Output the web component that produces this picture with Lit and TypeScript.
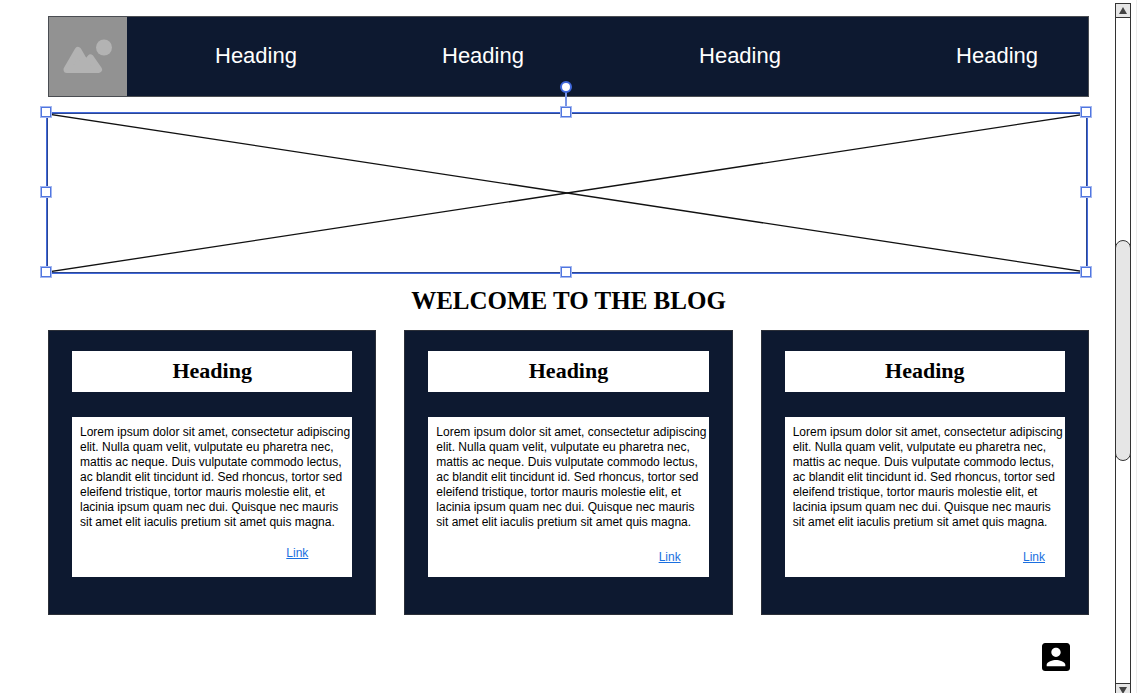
import { LitElement, html, css, svg } from "lit";
import { customElement, property } from "lit/decorators.js";
import { classMap } from "lit/directives/class-map.js";

const LOREM = [
  "Lorem ipsum dolor sit amet, consectetur adipiscing",
  "elit. Nulla quam velit, vulputate eu pharetra nec,",
  "mattis ac neque. Duis vulputate commodo lectus,",
  "ac blandit elit tincidunt id. Sed rhoncus, tortor sed",
  "eleifend tristique, tortor mauris molestie elit, et",
  "lacinia ipsum quam nec dui. Quisque nec mauris",
  "sit amet elit iaculis pretium sit amet quis magna.",
].join("\n");

@customElement("site-nav")
class SiteNav extends LitElement {
  static styles = css`
    :host {
      display: block;
    }
    .bar {
      display: flex;
      box-sizing: border-box;
      height: 81px;
      background: #0d1930;
      border: 1px solid #4a4d52;
    }
    .logo {
      flex: none;
      width: 78px;
      background: #929292;
    }
    .logo svg {
      display: block;
    }
    .links {
      flex: 1;
      display: grid;
      grid-template-columns: 227fr 257fr 257fr auto;
      align-items: center;
      padding: 0 50px 2px 88px;
    }
    .link {
      color: #fff;
      font-size: 22px;
      line-height: 26px;
      text-decoration: none;
    }
  `;

  render() {
    return html`
      <nav class="bar">
        <div class="logo">
          <svg width="78" height="79" viewBox="0 0 78 79" fill="#b3b3b3" aria-hidden="true">
            <circle cx="55" cy="30.500" r="8" />
            <path
              d="M18 52.500L29 33.500L40 52.500ZM32 52.500L41.500 41L49.500 52.500Z"
              stroke="#b3b3b3"
              stroke-width="7"
              stroke-linejoin="round"
            />
          </svg>
        </div>
        <div class="links">
          ${[1, 2, 3, 4].map(() => html`<a class="link" href="#">Heading</a>`)}
        </div>
      </nav>
    `;
  }
}

@customElement("hero-frame")
class HeroFrame extends LitElement {
  static styles = css`
    :host {
      display: block;
    }
    .frame {
      position: relative;
      box-sizing: border-box;
      height: 162px;
      border: 2px solid #4169dc;
    }
    .cross {
      display: block;
      box-sizing: border-box;
      width: 100%;
      height: 100%;
    }
    .edge {
      position: absolute;
      inset: -1px;
      border: 1px solid #2c4690;
    }
    .selection {
      position: absolute;
      inset: -2px 0 0 -2px;
    }
    .handle {
      position: absolute;
      box-sizing: border-box;
      width: 12px;
      height: 12px;
      margin: -6px;
      background: #fff;
      border: 1px solid #a3b7f0;
      box-shadow: inset 0 0 0 1px #5076e0;
    }
    .left {
      left: 0;
    }
    .center {
      left: 50%;
    }
    .right {
      left: 100%;
    }
    .top {
      top: 0;
    }
    .middle {
      top: 50%;
    }
    .bottom {
      top: 100%;
    }
    .stem {
      position: absolute;
      left: 50%;
      bottom: 100%;
      width: 2px;
      height: 20px;
      margin-left: -1px;
      background: #7894e6;
    }
    .rotate {
      position: absolute;
      left: 50%;
      top: -25px;
      box-sizing: border-box;
      width: 12px;
      height: 12px;
      margin: -6px;
      background: #fff;
      border: 2px solid #4169dc;
      border-radius: 50%;
    }
  `;

  render() {
    const rows = ["top", "middle", "bottom"];
    const cols = ["left", "center", "right"];
    return html`
      <div class="frame">
        <svg class="cross" viewBox="0 0 100 100" preserveAspectRatio="none" aria-hidden="true">
          ${["M0 0L100 100", "M0 100L100 0"].map(
            (d) => svg`<path d=${d} stroke="#111" stroke-width="1.300" vector-effect="non-scaling-stroke" />`
          )}
        </svg>
        <div class="edge"></div>
        <div class="selection">
          <div class="stem"></div>
          <div class="rotate"></div>
          ${rows.map((r) =>
            cols.map((c) =>
              r === "middle" && c === "center"
                ? null
                : html`<div class=${classMap({ handle: true, [r]: true, [c]: true })}></div>`
            )
          )}
        </div>
      </div>
    `;
  }
}

@customElement("blog-card")
class BlogCard extends LitElement {
  @property() link = "end";

  static styles = css`
    :host {
      display: block;
    }
    .card {
      box-sizing: border-box;
      background: #0d1930;
      border: 1px solid #2b2f38;
      padding: 20px 23px 37px;
    }
    .title {
      margin: 0 0 25px;
      padding: 7px 0 8px;
      background: #fff;
      font: bold 22px/26px "Liberation Serif", "Times New Roman", serif;
      text-align: center;
    }
    .body {
      box-sizing: border-box;
      min-height: 160px;
      padding: 8px 0 0 8px;
      background: #fff;
    }
    .text {
      margin: 0;
      font-size: 12px;
      line-height: 15px;
      white-space: pre-line;
    }
    .more {
      display: flex;
      justify-content: flex-end;
      padding: 20px 20px 0 0;
      font-size: 12px;
      line-height: 15px;
    }
    .more.inset {
      padding: 16px 44px 0 0;
    }
    .more.near {
      padding-right: 28px;
    }
    .link {
      color: #1a6fe0;
    }
  `;

  render() {
    return html`
      <article class="card">
        <h2 class="title">Heading</h2>
        <div class="body">
          <p class="text">${LOREM}</p>
          <div class=${classMap({ more: true, inset: this.link === "inset", near: this.link === "near" })}>
            <a class="link" href="#">Link</a>
          </div>
        </div>
      </article>
    `;
  }
}

@customElement("page-scrollbar")
class PageScrollbar extends LitElement {
  static styles = css`
    :host {
      display: block;
    }
    .track {
      display: grid;
      grid-template-rows: 14px 222fr 221fr 222fr 14px;
      box-sizing: border-box;
      width: 16px;
      height: 100%;
      background: #fff;
      border: 1px solid #333;
    }
    .arrow {
      display: grid;
      place-items: center;
      padding: 0;
      background: #e6e6e6;
      border: 0 solid #333;
    }
    .up {
      grid-row: 1;
      border-bottom-width: 1px;
    }
    .down {
      grid-row: 5;
      border-top-width: 1px;
    }
    .arrow svg {
      display: block;
    }
    .thumb {
      grid-row: 3;
      margin: 0 -1px;
      background: #e6e6e6;
      border: 1px solid #333;
      border-radius: 8px;
    }
  `;

  render() {
    return html`
      <div class="track">
        <button class="arrow up" aria-label="Scroll up">
          <svg width="8" height="7" viewBox="0 0 8 7"><path d="M4 0L8 7H0Z" fill="#444" /></svg>
        </button>
        <div class="thumb"></div>
        <button class="arrow down" aria-label="Scroll down">
          <svg width="8" height="7" viewBox="0 0 8 7"><path d="M0 0H8L4 7Z" fill="#444" /></svg>
        </button>
      </div>
    `;
  }
}

@customElement("app-root")
class AppRoot extends LitElement {
  static styles = css`
    :host {
      display: flex;
      box-sizing: border-box;
      height: 100vh;
      overflow: hidden;
      background: #fff;
      border-right: 1px solid #ececec;
      color: #000;
      font-family: "Liberation Sans", Arial, sans-serif;
    }
    .page {
      flex: 1;
      min-width: 0;
      padding: 16px 26px 0 48px;
    }
    .hero {
      margin: 15px 1px 0 -2px;
    }
    .welcome {
      margin: 12px 0 14px;
      font: bold 25px/30px "Liberation Serif", "Times New Roman", serif;
      text-align: center;
    }
    .cards {
      display: grid;
      grid-template-columns: repeat(3, 1fr);
      gap: 28px;
    }
    .footer {
      display: flex;
      justify-content: flex-end;
      padding: 28px 19px 0 0;
    }
    .account {
      padding: 0;
      border: 0;
      background: none;
    }
    .account svg {
      display: block;
    }
    .scroll {
      flex: none;
      margin: 3px 5px -5px 0;
    }
  `;

  render() {
    return html`
      <main class="page">
        <site-nav></site-nav>
        <hero-frame class="hero"></hero-frame>
        <h1 class="welcome">WELCOME TO THE BLOG</h1>
        <div class="cards">
          <blog-card link="inset"></blog-card>
          <blog-card link="near"></blog-card>
          <blog-card link="end"></blog-card>
        </div>
        <div class="footer">
          <button class="account" aria-label="Account">
            <svg width="28" height="28" viewBox="3 3 18 18">
              <path
                d="M3 5v14c0 1.100.890 2 2 2h14c1.100 0 2-.900 2-2V5c0-1.100-.900-2-2-2H5c-1.110 0-2 .900-2 2zm12 4c0 1.660-1.340 3-3 3s-3-1.340-3-3 1.340-3 3-3 3 1.340 3 3zm-9 8c0-2 4-3.100 6-3.100s6 1.100 6 3.100v1H6v-1z"
              />
            </svg>
          </button>
        </div>
      </main>
      <page-scrollbar class="scroll"></page-scrollbar>
    `;
  }
}
